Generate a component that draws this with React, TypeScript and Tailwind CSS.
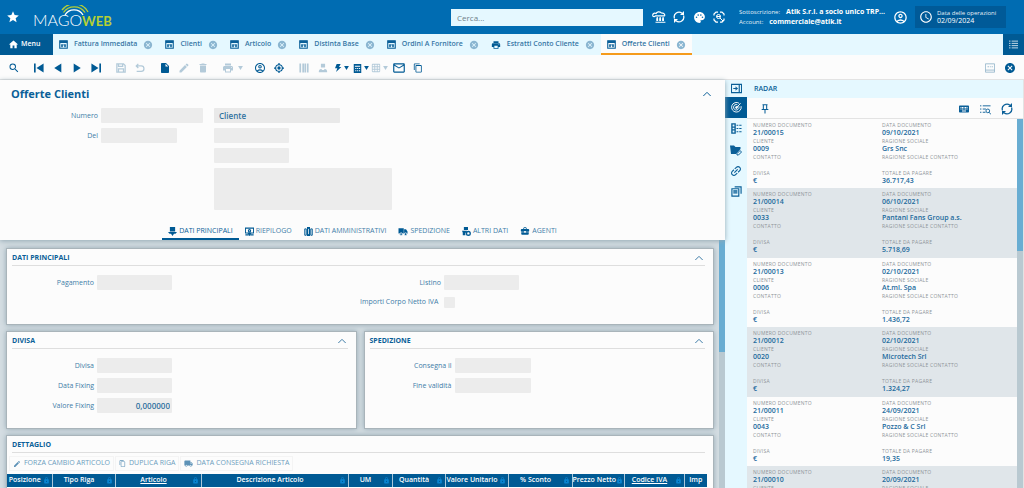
import type { ReactNode } from "react";
import {
  MdBusinessCenter,
  MdCancel,
  MdContentCopy,
  MdDelete,
  MdEdit,
  MdGridOn,
  MdHome,
  MdInsertDriveFile,
  MdKeyboard,
  MdLink,
  MdLocalShipping,
  MdLock,
  MdMailOutline,
  MdOutlineAccountCircle,
  MdPalette,
  MdPrint,
  MdSchedule,
  MdSearch,
  MdStar,
} from "react-icons/md";

interface IconProps {
  className?: string;
  children: ReactNode;
}

function Glyph({ className = "size-[10px]", children }: IconProps) {
  return (
    <svg viewBox="0 0 24 24" className={className} fill="none" stroke="currentColor" strokeWidth="2" aria-hidden="true">
      {children}
    </svg>
  );
}

function Logo() {
  return (
    <svg viewBox="0 0 80 24" className="h-6 w-20" fill="none" role="img" aria-label="MagoWeb">
      <text x="-1" y="21" fill="#fff" fontFamily="Lato, sans-serif" fontWeight="300" fontSize="16">
        MAGO
      </text>
      <text x="48" y="21" fill="#b5cf35" fontFamily="Lato, sans-serif" fontWeight="700" fontSize="13">
        WEB
      </text>
      <path d="M31 10a10.500 10.500 0 0 1 18 0" stroke="#fff" strokeWidth="1.3" />
      <path d="M29.500 7.500a13 13 0 0 1 21.500 0" stroke="#b5cf35" strokeWidth="1.3" />
      <path d="M28 5a15.500 15.500 0 0 1 26 2" stroke="#b5cf35" strokeWidth="1.3" />
    </svg>
  );
}

function WindowIcon() {
  return (
    <Glyph className="size-[9px] text-[#0a5f98]">
      <path d="M2 2h20v20H2z" strokeWidth="3" />
      <path d="M2 5h20" strokeWidth="6" />
      <path d="M8 12v7M16 12v7" strokeWidth="4" />
      <path d="M6 13h12" />
    </Glyph>
  );
}

function RefreshIcon({ className }: { className?: string }) {
  return (
    <Glyph className={className}>
      <path d="M3 15A9.500 9.500 0 0 1 18 4.500M21 9A9.500 9.500 0 0 1 6 19.500" strokeWidth="2.500" />
      <path d="M14 8h8V0zM10 16H2v8z" fill="currentColor" stroke="none" />
    </Glyph>
  );
}

function Chevron() {
  return (
    <Glyph className="h-2 w-[10px]">
      <path d="M1 18 12 7l11 11" strokeWidth="3" />
    </Glyph>
  );
}

function Caret() {
  return (
    <svg viewBox="0 0 6 5" className="h-[4px] w-[5px]" fill="currentColor" aria-hidden="true">
      <path d="M0 0h6L3 5z" />
    </svg>
  );
}

const openTabs = [
  { title: "Fattura Immediata" },
  { title: "Clienti" },
  { title: "Articolo" },
  { title: "Distinta Base" },
  { title: "Ordini A Fornitore" },
  { title: "Estratti Conto Cliente", print: true },
  { title: "Offerte Clienti", active: true },
];

interface Tool {
  name: string;
  icon: ReactNode;
  off?: boolean;
  caret?: boolean;
}

const toolGroups: Tool[][] = [
  [{ name: "Cerca", icon: <MdSearch className="size-3" /> }],
  [
    {
      name: "Primo",
      icon: (
        <Glyph>
          <path d="M0 1h4v22H0zM23 1v22L6 12z" fill="currentColor" stroke="none" />
        </Glyph>
      ),
    },
    {
      name: "Precedente",
      icon: (
        <Glyph>
          <path d="M20 1v22L3 12z" fill="currentColor" stroke="none" />
        </Glyph>
      ),
    },
    {
      name: "Successivo",
      icon: (
        <Glyph>
          <path d="M4 1v22l17-11z" fill="currentColor" stroke="none" />
        </Glyph>
      ),
    },
    {
      name: "Ultimo",
      icon: (
        <Glyph>
          <path d="M20 1h4v22h-4zM1 1v22l17-11z" fill="currentColor" stroke="none" />
        </Glyph>
      ),
    },
  ],
  [
    {
      name: "Salva",
      off: true,
      icon: (
        <Glyph>
          <path d="M2 2h16l4 4v16H2zM6 2v6h10V2M6 22v-8h12v8" strokeWidth="3" />
        </Glyph>
      ),
    },
    {
      name: "Annulla",
      off: true,
      icon: (
        <Glyph>
          <path d="M3 7h12a6 6 0 0 1 0 13H4M8 2 3 7l5 5" strokeWidth="3" />
        </Glyph>
      ),
    },
  ],
  [
    { name: "Nuovo", icon: <MdInsertDriveFile className="size-3" /> },
    { name: "Modifica", off: true, icon: <MdEdit className="size-3" /> },
    { name: "Elimina", off: true, icon: <MdDelete className="size-3" /> },
  ],
  [{ name: "Stampa", off: true, caret: true, icon: <MdPrint className="size-3" /> }],
  [
    { name: "Utente", icon: <MdOutlineAccountCircle className="size-3" /> },
    {
      name: "Posizione",
      icon: (
        <Glyph>
          <circle cx="12" cy="12" r="8" strokeWidth="2.500" />
          <circle cx="12" cy="12" r="4" fill="currentColor" stroke="none" />
          <path d="M12 0v5M12 19v5M0 12h5M19 12h5" strokeWidth="3" />
        </Glyph>
      ),
    },
  ],
  [
    {
      name: "Codici",
      off: true,
      icon: (
        <Glyph>
          <path d="M3 1v22M10 1v22M15 1v22M21 1v22" strokeWidth="4" />
        </Glyph>
      ),
    },
    {
      name: "Anagrafica",
      off: true,
      icon: (
        <Glyph>
          <path d="M7 2h10v9H7zM2 22c0-7 4-7 7-8v3h6v-3c3 1 7 1 7 8z" fill="currentColor" stroke="none" />
        </Glyph>
      ),
    },
  ],
];

const menuTools: Tool[] = [
  {
    name: "Azioni",
    icon: (
      <Glyph className="h-[10px] w-2">
        <path d="M8 0h12l-5 9h7L6 24l4-11H3z" fill="currentColor" stroke="none" />
      </Glyph>
    ),
  },
  {
    name: "Calcola",
    icon: (
      <Glyph className="size-[9px]">
        <path d="M2 0h20v24H2z" fill="currentColor" stroke="none" />
        <path d="M5 6h14M6 12h3M11 12h3M16 12h3M6 18h3M11 18h3M16 18h3" stroke="#fff" strokeWidth="3" />
      </Glyph>
    ),
  },
  { name: "Griglia", off: true, icon: <MdGridOn className="size-[10px]" /> },
];

function TruckIcon() {
  return (
    <Glyph className="h-[9px] w-[10px]">
      <path d="M0 3h14v14H0zM15 6h5l4 6v6h-9z" fill="currentColor" stroke="none" />
      <circle cx="7" cy="19" r="3.500" fill="currentColor" stroke="#fff" />
      <circle cx="19" cy="19" r="3.500" fill="currentColor" stroke="#fff" />
    </Glyph>
  );
}

const formTabs = [
  {
    title: "DATI PRINCIPALI",
    active: true,
    icon: (
      <Glyph className="size-[9px]">
        <path d="M5 0h14v12H5zM0 13h24l-4 5h-4l-4 6-4-6H4z" fill="currentColor" stroke="none" />
      </Glyph>
    ),
  },
  {
    title: "RIEPILOGO",
    icon: (
      <Glyph className="size-[9px]">
        <path d="M1 3h22v13H1zM1 21h9M14 21h9" strokeWidth="3" />
        <circle cx="12" cy="10" r="3" strokeWidth="3" />
        <path d="m8 16 4 7 4-7z" fill="currentColor" />
      </Glyph>
    ),
  },
  {
    title: "DATI AMMINISTRATIVI",
    icon: (
      <Glyph className="size-[9px]">
        <path d="M2 5h4v17H2zM18 5h4v17h-4z" strokeWidth="2.5" />
        <path d="M8 0h8v24H8z" fill="currentColor" stroke="none" />
        <path d="M12 5v14" stroke="#fff" />
      </Glyph>
    ),
  },
  { title: "SPEDIZIONE", icon: <TruckIcon /> },
  {
    title: "ALTRI DATI",
    icon: (
      <Glyph className="size-[9px]">
        <path d="M5 0h11v8H5zM0 10h13v5H9v7H2v-7z" fill="currentColor" stroke="none" />
        <circle cx="17" cy="17" r="5" strokeWidth="3.500" />
      </Glyph>
    ),
  },
  { title: "AGENTI", icon: <MdBusinessCenter className="size-[10px]" /> },
];

const columns = [
  { title: "Posizione", width: "w-[45px]" },
  { title: "Tipo Riga", width: "w-[63px]" },
  { title: "Articolo", width: "w-[86px]", link: true },
  { title: "Descrizione Articolo", width: "w-[147px]" },
  { title: "UM", width: "w-[44px]" },
  { title: "Quantità", width: "w-[53px]" },
  { title: "Valore Unitario", width: "w-[63px]" },
  { title: "% Sconto", width: "w-[64px]" },
  { title: "Prezzo Netto", width: "w-[52px]" },
  { title: "Codice IVA", width: "w-[60px]", link: true },
  { title: "Imp", width: "w-[23px]", last: true },
];

const records = [
  { doc: "21/00015", date: "09/10/2021", code: "0009", name: "Grs Snc", total: "36.717,43" },
  { doc: "21/00014", date: "06/10/2021", code: "0033", name: "Pantani Fans Group a.s.", total: "5.718,69" },
  { doc: "21/00013", date: "02/10/2021", code: "0006", name: "At.ml. Spa", total: "1.436,72" },
  { doc: "21/00012", date: "02/10/2021", code: "0020", name: "Microtech Srl", total: "1.324,27" },
  { doc: "21/00011", date: "24/09/2021", code: "0043", name: "Pozzo & C Srl", total: "19,35" },
  { doc: "21/00010", date: "20/09/2021", code: "", name: "", total: "" },
];

const sideIcons = [
  {
    name: "Comprimi",
    icon: (
      <Glyph className="size-[11px]">
        <path d="M1 3h22v18H1zM18 3v18M5 12h9" strokeWidth="2.500" />
        <path d="M10 7v10l5-5z" fill="currentColor" stroke="none" />
      </Glyph>
    ),
  },
  {
    name: "Radar",
    active: true,
    icon: (
      <Glyph className="size-[11px]">
        <path d="M22 9a10.500 10.500 0 1 1-4-6" />
        <path d="M17 9a6 6 0 1 1-3-3M12 12l9-9" />
        <circle cx="12" cy="12" r="2" fill="currentColor" />
      </Glyph>
    ),
  },
  {
    name: "Campi",
    icon: (
      <Glyph className="size-[11px]">
        <path d="M2 2h7v20H2zM2 9h7M2 15h7" strokeWidth="3" />
        <path d="M12 5h4M18 5h5M12 12h4M18 12h5M12 19h4M18 19h5" strokeWidth="2.500" />
      </Glyph>
    ),
  },
  {
    name: "Allegati",
    icon: (
      <Glyph className="size-3">
        <path d="M0 3h8l3 3h10v4l-9 10H2z" fill="currentColor" stroke="none" />
        <path d="m14 19 6-6 3 3-6 6h-3z" />
      </Glyph>
    ),
  },
  { name: "Collegamenti", icon: <MdLink className="size-[14px] -rotate-45" /> },
  {
    name: "Documenti",
    icon: (
      <Glyph className="size-[11px]">
        <path d="M8 2h14v15M2 6h15v16H2z" strokeWidth="2.500" />
        <path d="M5 11h9M5 15h9" strokeWidth="3" />
      </Glyph>
    ),
  },
];

interface FieldProps {
  id: string;
  label: string;
  labelWidth: string;
  width: string;
  value?: string;
}

function Field({ id, label, labelWidth, width, value = "" }: FieldProps) {
  return (
    <div className="flex items-center gap-[3px]">
      <label htmlFor={id} className={`${labelWidth} shrink-0 text-right text-[7px] leading-[15px] text-[#3f7da8]`}>
        {label}
      </label>
      <input
        id={id}
        readOnly
        value={value}
        className={`${width} h-[15px] rounded-[1px] bg-[#ececec] px-[2px] text-right text-[8px] font-semibold text-[#2f719f] outline-none`}
      />
    </div>
  );
}

interface CardProps {
  title: string;
  collapsible?: boolean;
  className?: string;
  children: ReactNode;
}

function Card({ title, collapsible = true, className = "", children }: CardProps) {
  return (
    <section className={`border border-[#a9b4ba] bg-[#fcfcfc] shadow-[0_0_5px_#93a8b3] ${className}`}>
      <div className="mr-2 ml-[5px] flex h-[17px] items-center justify-between border-b border-[#dedede] pt-[2px] pr-[1px]">
        <h2 className="text-[7px] font-bold text-[#0a5f98]">{title}</h2>
        {collapsible && (
          <button aria-label={`Comprimi ${title}`} className="text-[#3f7da8]">
            <Chevron />
          </button>
        )}
      </div>
      {children}
    </section>
  );
}

function ToolButton({ tool }: { tool: Tool }) {
  return (
    <button
      aria-label={tool.name}
      className={`flex h-full shrink-0 items-center ${tool.off ? "text-[#b3cad9]" : "text-[#005a94]"}`}
    >
      <span className="flex w-[19px] justify-center">{tool.icon}</span>
      {tool.caret && (
        <span className="flex w-[7px] justify-center">
          <Caret />
        </span>
      )}
    </button>
  );
}

function Header() {
  return (
    <header className="flex h-[34px] shrink-0 items-center bg-[#006cb2] pr-[18px] text-white">
      <button aria-label="Preferiti" className="ml-[6px]">
        <MdStar className="size-[14px]" />
      </button>
      <div className="ml-[14px]">
        <Logo />
      </div>
      <input
        aria-label="Cerca"
        placeholder="Cerca..."
        className="ml-auto h-[17px] w-[192px] bg-[#e5f8ff] px-[6px] text-[8px] text-[#333] outline-none placeholder:text-[#6f7f88]"
      />
      <div className="ml-[6px] flex items-center">
        <button aria-label="Servizi" className="flex w-5 justify-center">
          <Glyph className="size-[14px]">
            <path d="M1 10c0-5 4-5 6-4 1-3 6-4 9-1 4 0 6 2 6 5M1 10c2 2 4 1 5 0h16M9 12v6M14 12v6M19 12v6M6 21h17" />
            <path d="M9 14v5M14 14v5M19 14v5" strokeWidth="3" />
          </Glyph>
        </button>
        <button aria-label="Aggiorna" className="flex w-5 justify-center">
          <RefreshIcon className="size-3" />
        </button>
        <button aria-label="Tema" className="flex w-5 justify-center">
          <MdPalette className="size-[13px]" />
        </button>
        <button aria-label="Assistenza" className="flex w-5 justify-center">
          <Glyph className="size-3">
            <path d="M2 9V6l4-4h4M14 2h4l4 4v3M22 15v3l-4 4h-4M10 22H6l-4-4v-3" strokeWidth="2.500" />
            <circle cx="11" cy="11" r="4" />
            <path d="m14 14 6 6M7 11h8" />
          </Glyph>
        </button>
      </div>
      <div className="ml-[10px] w-[149px] text-[7px] leading-[10px] whitespace-nowrap">
        <p className="flex gap-[6px]">
          <span className="text-[6px] opacity-90">Sottoscrizione:</span>
          <b>Atik S.r.l. a socio unico TRP...</b>
        </p>
        <p className="flex gap-[6px]">
          <span className="text-[6px] opacity-90">Account:</span>
          <b>commerciale@atik.it</b>
        </p>
      </div>
      <button aria-label="Profilo" className="ml-[5px]">
        <MdOutlineAccountCircle className="size-[15px]" />
      </button>
      <div className="ml-[7px] flex h-[22px] w-[91px] items-center gap-1 bg-[#005a98] pl-1 whitespace-nowrap">
        <MdSchedule className="size-[14px] shrink-0" />
        <div className="leading-[7px]">
          <p className="text-[6px] opacity-90">Data delle operazioni</p>
          <p className="text-[7px]">02/09/2024</p>
        </div>
      </div>
    </header>
  );
}

function TabBar() {
  return (
    <nav className="flex h-[21px] shrink-0 bg-[#e5f8ff] text-[7px] font-semibold text-[#3576a5]">
      <button className="flex w-[53px] items-center gap-[2px] bg-[#005a94] pl-2 text-white">
        <MdHome className="size-[11px]" />
        Menu
      </button>
      {openTabs.map((tab) => (
        <div
          key={tab.title}
          className={`flex shrink-0 items-center gap-[6px] border-b-2 px-[6px] pt-[2px] ${
            tab.active ? "border-[#f59b1c] bg-[#fcfcfc]" : "border-transparent"
          }`}
        >
          {tab.print ? <MdPrint className="size-[10px] text-[#005a94]" /> : <WindowIcon />}
          <a href="#">{tab.title}</a>
          <button aria-label={`Chiudi ${tab.title}`} className="text-[#8bb6d1]">
            <MdCancel className="size-[10px]" />
          </button>
        </div>
      ))}
      <button aria-label="Elenco schede" className="ml-auto flex w-[21px] items-center justify-center bg-[#005a94] text-white">
        <Glyph className="size-[9px]">
          <path d="M0 3h4M7 3h17M0 9h4M7 9h17M0 15h4M7 15h17M0 21h4M7 21h17" />
        </Glyph>
      </button>
    </nav>
  );
}

function Toolbar() {
  return (
    <div className="flex h-[25px] shrink-0 items-center border-b border-[#e3e3e3] bg-[#fcfcfc] pt-[2px] pl-1">
      <div className="flex gap-[6px]">
        {toolGroups.map((group) => (
          <div key={group[0].name} className="flex">
            {group.map((tool) => (
              <ToolButton key={tool.name} tool={tool} />
            ))}
          </div>
        ))}
      </div>
      {menuTools.map((tool) => (
        <button
          key={tool.name}
          aria-label={tool.name}
          className={`flex w-[19px] items-center justify-center gap-[2px] ${tool.off ? "text-[#b3cad9]" : "text-[#005a94]"}`}
        >
          {tool.icon}
          <Caret />
        </button>
      ))}
      <ToolButton tool={{ name: "Email", icon: <MdMailOutline className="size-[14px]" /> }} />
      <ToolButton tool={{ name: "Copia", icon: <MdContentCopy className="size-[10px]" /> }} />
      <button aria-label="Scorciatoie" className="ml-auto text-[#8fb2c8]">
        <Glyph className="size-[10px]">
          <path d="M1 2h22v20H1zM1 17h22M6 9h4M12 9h2M16 9h3" />
        </Glyph>
      </button>
      <button aria-label="Chiudi" className="mr-2 ml-[9px] text-[#005a94]">
        <MdCancel className="size-3" />
      </button>
    </div>
  );
}

function DocumentHead() {
  return (
    <div className="relative flex h-[160px] shrink-0 flex-col bg-[#fcfcfc] shadow-[0_1px_5px_#93a8b3]">
      <div className="flex h-7 items-center justify-between pr-[13px] pl-[11px] text-[#0a5f98]">
        <h1 className="text-[11px] font-bold">Offerte Clienti</h1>
        <button aria-label="Comprimi testata">
          <Chevron />
        </button>
      </div>
      <div className="flex">
        <div className="flex w-[214px] flex-col gap-[5px]">
          <Field id="numero" label="Numero" labelWidth="w-[98px]" width="w-[102px]" />
          <Field id="del" label="Del" labelWidth="w-[98px]" width="w-[76px]" />
        </div>
        <div className="flex flex-col items-start gap-[5px]">
          <input
            aria-label="Tipo soggetto"
            readOnly
            value="Cliente"
            className="h-[15px] w-[126px] rounded-[1px] bg-[#e9e9e9] px-[5px] text-[8px] font-semibold text-[#2f719f] outline-none"
          />
          <input aria-label="Codice cliente" className="h-[15px] w-[75px] rounded-[1px] bg-[#ececec]" />
          <input aria-label="Sede" className="h-[15px] w-[75px] rounded-[1px] bg-[#ececec]" />
          <textarea aria-label="Indirizzo" className="h-[42px] w-[178px] resize-none rounded-[1px] bg-[#ececec]" />
        </div>
      </div>
      <div className="mt-auto flex justify-center">
        {formTabs.map((tab) => (
          <button
            key={tab.title}
            className={`flex h-[18px] items-center gap-[2px] border-b-2 px-[6px] pt-[2px] text-[7px] ${
              tab.active ? "border-[#005a94] text-[#0a5f98]" : "border-transparent text-[#3f7da8]"
            }`}
          >
            <span className="text-[#005a94]">{tab.icon}</span>
            {tab.title}
          </button>
        ))}
      </div>
    </div>
  );
}

function DetailTable() {
  return (
    <div className="pr-[7px]">
      <table className="w-full table-fixed border-collapse bg-[#005a94] text-[7px] text-white">
        <thead>
          <tr>
            {columns.map((col) => (
              <th key={col.title} className={`${col.width} h-[13px] border-r border-[#a9c6d9] p-0 font-semibold last:border-r-0`}>
                <div className="flex items-center">
                  <span className={`flex-1 text-center whitespace-nowrap ${col.link ? "underline" : ""}`}>{col.title}</span>
                  {!col.last && <MdLock className="mr-[2px] size-[7px] shrink-0 text-[#0a84d0]" />}
                </div>
              </th>
            ))}
          </tr>
        </thead>
        <tbody />
      </table>
    </div>
  );
}

const rowActions = [
  { title: "FORZA CAMBIO ARTICOLO", icon: <MdEdit className="size-2" /> },
  { title: "DUPLICA RIGA", icon: <MdContentCopy className="size-[7px]" /> },
  { title: "DATA CONSEGNA RICHIESTA", icon: <MdLocalShipping className="size-[9px]" /> },
];

function DocumentBody() {
  return (
    <div className="flex min-h-0 flex-1">
      <div className="flex min-w-0 flex-1 flex-col gap-[6px] overflow-hidden bg-[#d4dde2] pt-2 pr-[5px] pl-[6px]">
        <Card title="DATI PRINCIPALI" className="h-[77px] shrink-0">
          <div className="flex pt-[9px]">
            <div className="w-1/2">
              <Field id="pagamento" label="Pagamento" labelWidth="w-[87px]" width="w-[75px]" />
            </div>
            <div className="flex w-1/2 flex-col gap-[5px]">
              <Field id="listino" label="Listino" labelWidth="w-[81px]" width="w-[75px]" />
              <div className="flex h-[15px] items-center gap-2">
                <label htmlFor="netto" className="w-[76px] text-right text-[7px] whitespace-nowrap text-[#3f7da8]">
                  Importi Corpo Netto IVA
                </label>
                <input id="netto" type="checkbox" className="size-[11px] appearance-none rounded-[1px] bg-[#ececec]" />
              </div>
            </div>
          </div>
        </Card>
        <div className="flex shrink-0 gap-[7px]">
          <Card title="DIVISA" className="h-[98px] flex-1">
            <div className="flex flex-col gap-[5px] pt-[9px]">
              <Field id="divisa" label="Divisa" labelWidth="w-[87px]" width="w-[75px]" />
              <Field id="data-fixing" label="Data Fixing" labelWidth="w-[87px]" width="w-[75px]" />
              <Field id="valore-fixing" label="Valore Fixing" labelWidth="w-[87px]" width="w-[75px]" value="0,000000" />
            </div>
          </Card>
          <Card title="SPEDIZIONE" className="h-[98px] flex-1">
            <div className="flex flex-col gap-[5px] pt-[9px]">
              <Field id="consegna" label="Consegna il" labelWidth="w-[87px]" width="w-[76px]" />
              <Field id="validita" label="Fine validità" labelWidth="w-[87px]" width="w-[76px]" />
            </div>
          </Card>
        </div>
        <Card title="DETTAGLIO" collapsible={false} className="h-[120px] shrink-0">
          <div className="flex h-[21px] items-center gap-[1px] pl-[2px]">
            {rowActions.map((action) => (
              <button
                key={action.title}
                className="flex h-[15px] items-center gap-[3px] border border-[#f4f4f4] px-[3px] text-[7px] text-[#6c9cbd]"
              >
                <span className="text-[#5d92b7]">{action.icon}</span>
                {action.title}
              </button>
            ))}
          </div>
          <DetailTable />
        </Card>
      </div>
      <div className="w-[6px] bg-[#b9c9d1]">
        <div className="h-[112px] bg-[#69add2]" />
      </div>
    </div>
  );
}

function Cell({ label, value }: { label: string; value?: string }) {
  return (
    <div className="h-4 whitespace-nowrap">
      <dt className="text-[5px] leading-[8px] tracking-wider text-[#8f9599]">{label}</dt>
      <dd className="text-[7px] leading-[7px] font-semibold text-[#226a9c]">{value}</dd>
    </div>
  );
}

function Radar() {
  return (
    <aside className="flex w-[277px] shrink-0 flex-col border-r border-[#e3e3e3] bg-[#fcfcfc]">
      <h2 className="flex h-[18px] shrink-0 items-center bg-[#e5f8ff] pl-[7px] text-[7px] font-semibold text-[#0a5f98]">RADAR</h2>
      <div className="flex h-[21px] shrink-0 items-center gap-[10px] border-b border-[#e3e3e3] px-[10px] pt-[2px] text-[#0a5f98]">
        <button aria-label="Fissa" className="mr-auto ml-[3px]">
          <Glyph>
            <path d="M6 2h12M8 2v10M16 2v10M4 13h16M12 13v10" strokeWidth="2.500" />
          </Glyph>
        </button>
        <button aria-label="Tastiera">
          <MdKeyboard className="size-3" />
        </button>
        <button aria-label="Filtra">
          <Glyph className="size-[11px]">
            <path d="M0 4h3M6 4h17M0 11h3M6 11h7M0 18h3M6 18h6" />
            <circle cx="17" cy="15" r="4" />
            <path d="m20 18 4 5" />
          </Glyph>
        </button>
        <button aria-label="Aggiorna radar">
          <RefreshIcon className="size-3" />
        </button>
      </div>
      <div className="flex min-h-0 flex-1">
        <div className="min-w-0 flex-1 overflow-hidden">
          {records.map((r) => (
            <dl
              key={r.doc}
              className="grid grid-cols-[129px_1fr] border-[#e0e6ea] pt-[2px] pb-[3px] pl-[6px] even:border-b even:bg-[#e0e6ea]"
            >
              <Cell label="NUMERO DOCUMENTO" value={r.doc} />
              <Cell label="DATA DOCUMENTO" value={r.date} />
              <Cell label="CLIENTE" value={r.code} />
              <Cell label="RAGIONE SOCIALE" value={r.name} />
              <Cell label="CONTATTO" />
              <Cell label="RAGIONE SOCIALE CONTATTO" />
              <Cell label="DIVISA" value="€" />
              <Cell label="TOTALE DA PAGARE" value={r.total} />
            </dl>
          ))}
        </div>
        <div className="w-[6px] bg-[#b9c9d1]">
          <div className="h-[132px] bg-[#69add2]" />
        </div>
      </div>
    </aside>
  );
}

export default function App() {
  return (
    <div className="flex h-screen flex-col overflow-hidden bg-[#fcfcfc] font-['Open_Sans',sans-serif]">
      <Header />
      <TabBar />
      <Toolbar />
      <div className="flex min-h-0 flex-1">
        <main className="flex min-w-0 flex-1 flex-col">
          <DocumentHead />
          <DocumentBody />
        </main>
        <div className="flex w-[22px] shrink-0 flex-col bg-[#e5f8ff]">
          {sideIcons.map((item) => (
            <button
              key={item.name}
              aria-label={item.name}
              className={`flex h-[21px] items-center justify-center first:h-[17px] ${
                item.active ? "bg-[#005a94] text-white" : "text-[#0a5f98]"
              }`}
            >
              {item.icon}
            </button>
          ))}
        </div>
        <Radar />
      </div>
    </div>
  );
}
